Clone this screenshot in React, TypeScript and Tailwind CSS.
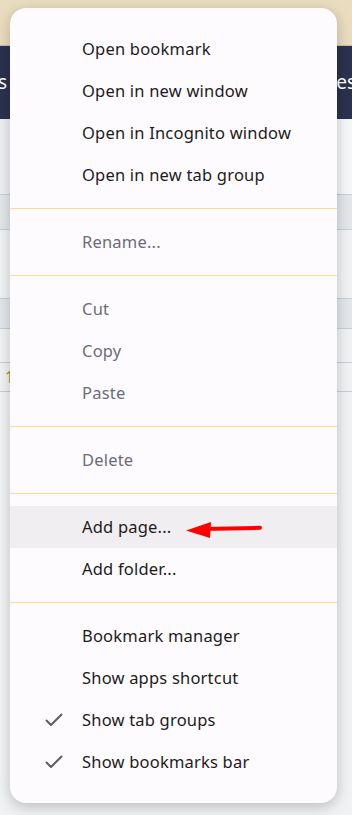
import React from 'react';

type Item = { label: string; disabled?: boolean; checked?: boolean; active?: boolean };

const groups: Item[][] = [
  [
    { label: 'Open bookmark' },
    { label: 'Open in new window' },
    { label: 'Open in Incognito window' },
    { label: 'Open in new tab group' },
  ],
  [{ label: 'Rename...', disabled: true }],
  [
    { label: 'Cut', disabled: true },
    { label: 'Copy', disabled: true },
    { label: 'Paste', disabled: true },
  ],
  [{ label: 'Delete', disabled: true }],
  [{ label: 'Add page...', active: true }, { label: 'Add folder...' }],
  [
    { label: 'Bookmark manager' },
    { label: 'Show apps shortcut' },
    { label: 'Show tab groups', checked: true },
    { label: 'Show bookmarks bar', checked: true },
  ],
];

const Check = () => (
  <svg width="18" height="14" viewBox="0 0 18 14" fill="none">
    <path d="M1.5 7.5 L6 12 L16.5 1.5" stroke="#5f5c59" strokeWidth="2" strokeLinecap="round" strokeLinejoin="round" />
  </svg>
);

const Arrow = () => (
  <svg width="80" height="20" viewBox="0 0 80 20" className="ml-[14px] mt-[5px]">
    <path d="M18 9 L75 7.8" stroke="#ff0000" strokeWidth="4" strokeLinecap="round" />
    <path d="M1 10.5 L26 2 L25 18 Z" fill="#ff0000" />
  </svg>
);

const MenuRow: React.FC<{ item: Item }> = ({ item }) => (
  <div className={`h-[42px] flex items-center ${item.active ? 'bg-[#f1eef1]' : ''}`}>
    <div className="w-[72px] flex justify-end pr-[19px]">{item.checked && <Check />}</div>
    <span
      className={`text-[16.5px] tracking-[0.2px] ${item.disabled ? 'text-[#6c6c78]' : 'text-[#1d1b20]'}`}
    >
      {item.label}
    </span>
    {item.active && <Arrow />}
  </div>
);

export default function App() {
  return (
    <div
      className="relative w-[352px] h-[815px] overflow-hidden bg-[#f1f2f4]"
      style={{ fontFamily: '"Noto Sans", "Open Sans", Arial, sans-serif' }}
    >
      {/* page behind the menu */}
      <div className="h-[46px] bg-[#e9dcbf] border-b border-[#c9bfa6]" />
      <div className="h-[73px] bg-[#2b3250] flex items-center justify-between text-white text-[19px]">
        <span className="-ml-[2px]">s</span>
        <span className="-mr-[4px]">es</span>
      </div>
      <div className="h-[75px] bg-gradient-to-r from-[#eef0f3] to-[#f6f7f8]" />
      <div className="h-[36px] bg-[#e3e6eb] border-y border-[#c8ceda]" />
      <div className="h-[68px] bg-[#f1f2f4]" />
      <div className="h-[31px] bg-[#e3e6eb] border-y border-[#c8ceda]" />
      <div className="h-[34px] bg-[#f1f2f4] border-b border-[#c8ceda]" />
      <div className="h-[29px] bg-[#f1f2f4] border-b border-[#c8ceda] text-[#b7862e] text-[16px] leading-[29px] pl-[5px]">
        1
      </div>

      {/* context menu */}
      <div className="absolute left-[10px] top-[8px] w-[327px] rounded-[16px] bg-[#fefbfe] shadow-[0_4px_14px_rgba(0,0,0,0.22)] pt-[20px] pb-[20px]">
        {groups.map((g, gi) => (
          <div key={gi}>
            {gi > 0 && <div className="h-px bg-[#fddc96] my-[12px]" />}
            {g.map(item => (
              <MenuRow key={item.label} item={item} />
            ))}
          </div>
        ))}
      </div>
    </div>
  );
}
